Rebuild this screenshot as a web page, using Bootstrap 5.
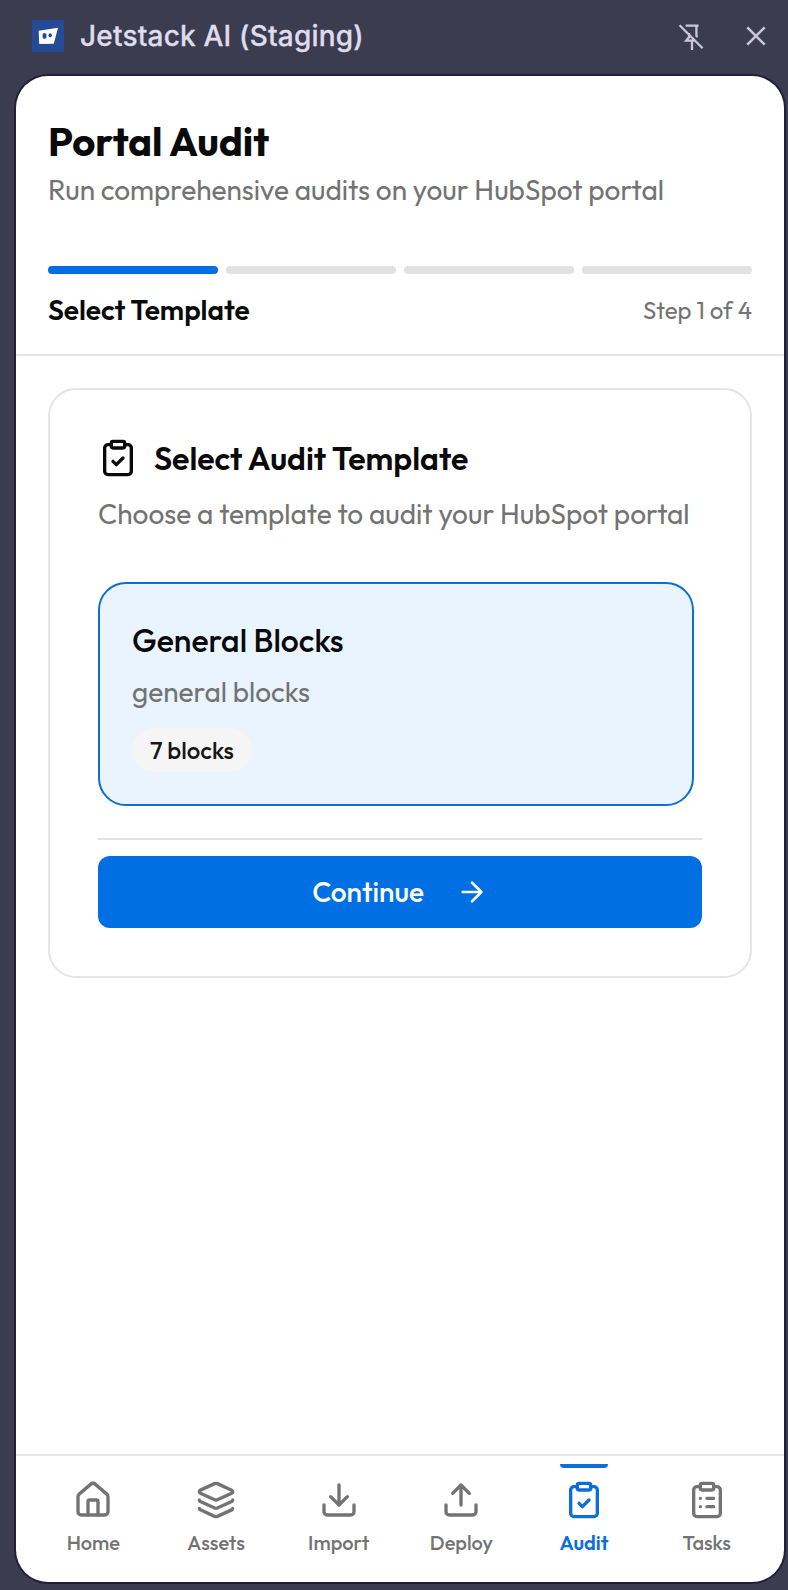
<!DOCTYPE html>
<html lang="en">
<head>
<meta charset="utf-8">
<meta name="viewport" content="width=device-width, initial-scale=1">
<title>Jetstack AI (Staging)</title>
<link href="https://cdn.jsdelivr.net/npm/bootstrap@5.3.0/dist/css/bootstrap.min.css" rel="stylesheet">
<style>
  :root { --brand: #006fe4; --ink: #0a0a0a; --soft: #737373; --line: #e5e5e5; --chrome: #3b3c4f; }
  body { font-family: Outfit, Lato, sans-serif; background: var(--chrome); color: var(--ink); }
  .shell { height: 1590px; padding: 0 4px 8px 16px; }
  .titlebar { height: 76px; padding: 0 18px 4px 16px; color: #dfdcee; }
  .app-name { font: 500 28px/36px Inter, sans-serif; letter-spacing: .2px; -webkit-text-stroke: .3px currentColor; margin-left: 16px; }
  .tools { gap: 40px; color: #cbc7db; }
  .panel { border-radius: 32px; box-shadow: 0 0 0 2px #251f36; overflow: hidden; }
  .page-head { padding: 40px 32px 24px; border-bottom: 2px solid var(--line); }
  .page-title { font-size: 40px; line-height: 50px; font-weight: 700; margin: 0 0 4px; }
  .sub { font-size: 28px; line-height: 40px; color: var(--soft); margin: 0; }
  .steps { gap: 8px; margin: 56px 0 16px; }
  .step-bar { height: 8px; border-radius: 4px; background: #e2e2e2; }
  .step-bar.done { background: var(--brand); }
  .step-name { font-size: 28px; line-height: 40px; font-weight: 600; }
  .step-count { font-size: 24px; line-height: 40px; color: var(--soft); }
  .content { padding: 32px; }
  .wizard { border: 2px solid var(--line); border-radius: 28px; padding: 48px; }
  .wizard-title { font-size: 32px; line-height: 40px; font-weight: 600; margin: 0; }
  .template { background: #e9f4ff; border: 2px solid #0f6fd0; border-radius: 28px; padding: 34px 32px 32px; margin: 48px 8px 32px 0; }
  .template-name { font-size: 32px; line-height: 44px; font-weight: 500; margin: 0 0 10px; }
  .count { background: #f5f5f5; color: #171717; font-size: 24px; line-height: 32px; font-weight: 500; padding: 6px 18px; border-radius: 22px; height: 44px; margin-top: 16px; }
  .actions { border-top: 2px solid #e2e2e2; padding-top: 16px; }
  .btn-go { --bs-btn-bg: var(--brand); --bs-btn-color: #fff; --bs-btn-hover-bg: #0063cc; --bs-btn-hover-color: #fff; height: 72px; border: 0; border-radius: 12px; font-size: 28px; line-height: 40px; font-weight: 500; gap: 32px; padding: 0; }
  .tabs { border-top: 2px solid var(--line); padding: 24px 16px 0; height: 128px; }
  .tab { color: var(--soft); font-size: 20px; line-height: 29px; font-weight: 500; text-decoration: none; gap: 8px; }
  .tab.on { color: #0a6edb; font-weight: 600; }
  .tab.on::before { content: ""; position: absolute; top: -16px; width: 48px; height: 4px; background: currentColor; border-radius: 0 0 4px 4px; }
  .lu { fill: none; stroke: currentColor; stroke-width: 2; stroke-linecap: round; stroke-linejoin: round; flex: none; display: block; }
</style>
</head>
<body>
<div class="shell d-flex flex-column">
  <header class="titlebar d-flex align-items-center flex-shrink-0">
    <svg width="32" height="32" viewBox="0 0 32 32"><path fill="#244b95" d="M0 0h32v32H0z"/><path fill="#fff" d="M6.7 10.7 26 7.8l-4.2 16-14.6.1z"/><ellipse cx="12.5" cy="15.9" rx="2" ry="2.8" fill="#244b95"/><ellipse cx="18.2" cy="15.3" rx="1.7" ry="2.1" fill="#244b95"/></svg>
    <span class="app-name">Jetstack AI (Staging)</span>
    <div class="tools d-flex ms-auto align-items-center">
      <svg width="28" height="28" viewBox="0 0 28 28" fill="none" stroke="currentColor" stroke-width="2.3"><path d="M1.6 3.2 24.6 26.2M7.6 3.6h13M18.4 3.6v10.2l1 1.3M11 11v4.3L8.2 18.6h8M14 18.6V28"/></svg>
      <svg width="20" height="20" viewBox="0 0 20 20" fill="none" stroke="currentColor" stroke-width="2.6"><path d="m1.3 1.3 17.4 17.4M18.7 1.3 1.3 18.7"/></svg>
    </div>
  </header>

  <main class="panel bg-white d-flex flex-column flex-grow-1">
    <section class="page-head">
      <h1 class="page-title">Portal Audit</h1>
      <p class="sub">Run comprehensive audits on your HubSpot portal</p>
      <div class="steps d-flex">
        <div class="step-bar done flex-fill"></div>
        <div class="step-bar flex-fill"></div>
        <div class="step-bar flex-fill"></div>
        <div class="step-bar flex-fill"></div>
      </div>
      <div class="d-flex justify-content-between">
        <span class="step-name">Select Template</span>
        <span class="step-count">Step 1 of 4</span>
      </div>
    </section>

    <section class="content flex-grow-1">
      <div class="wizard">
        <div class="d-flex align-items-center gap-3 mb-3">
          <svg class="lu" width="40" height="40" viewBox="0 0 24 24"><rect width="8" height="4" x="8" y="2" rx="1"/><path d="M16 4h2a2 2 0 0 1 2 2v14a2 2 0 0 1-2 2H6a2 2 0 0 1-2-2V6a2 2 0 0 1 2-2h2"/><path d="m9 14 2 2 4-4"/></svg>
          <h2 class="wizard-title">Select Audit Template</h2>
        </div>
        <p class="sub">Choose a template to audit your HubSpot portal</p>
        <div class="template">
          <h3 class="template-name">General Blocks</h3>
          <p class="sub">general blocks</p>
          <div class="d-flex"><span class="count">7 blocks</span></div>
        </div>
        <div class="actions">
          <button type="button" class="btn btn-go w-100 d-flex align-items-center justify-content-center">
            Continue
            <svg class="lu" width="32" height="32" viewBox="0 0 24 24"><path d="M5 12h14M12 5l7 7-7 7"/></svg>
          </button>
        </div>
      </div>
    </section>

    <nav class="tabs d-flex flex-shrink-0">
      <a href="#" class="tab d-flex flex-column align-items-center col">
        <svg class="lu" width="40" height="40" viewBox="0 0 24 24"><path d="M15 21v-8a1 1 0 0 0-1-1h-4a1 1 0 0 0-1 1v8"/><path d="M3 10a2 2 0 0 1 .709-1.528l7-5.999a2 2 0 0 1 2.582 0l7 5.999A2 2 0 0 1 21 10v9a2 2 0 0 1-2 2H5a2 2 0 0 1-2-2z"/></svg>
        <span>Home</span>
      </a>
      <a href="#" class="tab d-flex flex-column align-items-center col">
        <svg class="lu" width="40" height="40" viewBox="0 0 24 24"><path d="M12.83 2.18a2 2 0 0 0-1.66 0L2.6 6.08a1 1 0 0 0 0 1.83l8.58 3.91a2 2 0 0 0 1.66 0l8.58-3.9a1 1 0 0 0 0-1.83z"/><path d="M2 12a1 1 0 0 0 .58.91l8.6 3.91a2 2 0 0 0 1.65 0l8.58-3.9A1 1 0 0 0 22 12"/><path d="M2 17a1 1 0 0 0 .58.91l8.6 3.91a2 2 0 0 0 1.65 0l8.58-3.9A1 1 0 0 0 22 17"/></svg>
        <span>Assets</span>
      </a>
      <a href="#" class="tab d-flex flex-column align-items-center col">
        <svg class="lu" width="40" height="40" viewBox="0 0 24 24"><path d="M12 15V3M21 15v4a2 2 0 0 1-2 2H5a2 2 0 0 1-2-2v-4M7 10l5 5 5-5"/></svg>
        <span>Import</span>
      </a>
      <a href="#" class="tab d-flex flex-column align-items-center col">
        <svg class="lu" width="40" height="40" viewBox="0 0 24 24"><path d="M12 3v12M17 8l-5-5-5 5M21 15v4a2 2 0 0 1-2 2H5a2 2 0 0 1-2-2v-4"/></svg>
        <span>Deploy</span>
      </a>
      <a href="#" class="tab on position-relative d-flex flex-column align-items-center col">
        <svg class="lu" width="40" height="40" viewBox="0 0 24 24"><rect width="8" height="4" x="8" y="2" rx="1"/><path d="M16 4h2a2 2 0 0 1 2 2v14a2 2 0 0 1-2 2H6a2 2 0 0 1-2-2V6a2 2 0 0 1 2-2h2"/><path d="m9 14 2 2 4-4"/></svg>
        <span>Audit</span>
      </a>
      <a href="#" class="tab d-flex flex-column align-items-center col">
        <svg class="lu" width="40" height="40" viewBox="0 0 24 24"><rect width="8" height="4" x="8" y="2" rx="1"/><path d="M16 4h2a2 2 0 0 1 2 2v14a2 2 0 0 1-2 2H6a2 2 0 0 1-2-2V6a2 2 0 0 1 2-2h2M12 11h4M12 16h4M8 11h.01M8 16h.01"/></svg>
        <span>Tasks</span>
      </a>
    </nav>
  </main>
</div>
<script src="https://cdn.jsdelivr.net/npm/bootstrap@5.3.0/dist/js/bootstrap.bundle.min.js"></script>
</body>
</html>
